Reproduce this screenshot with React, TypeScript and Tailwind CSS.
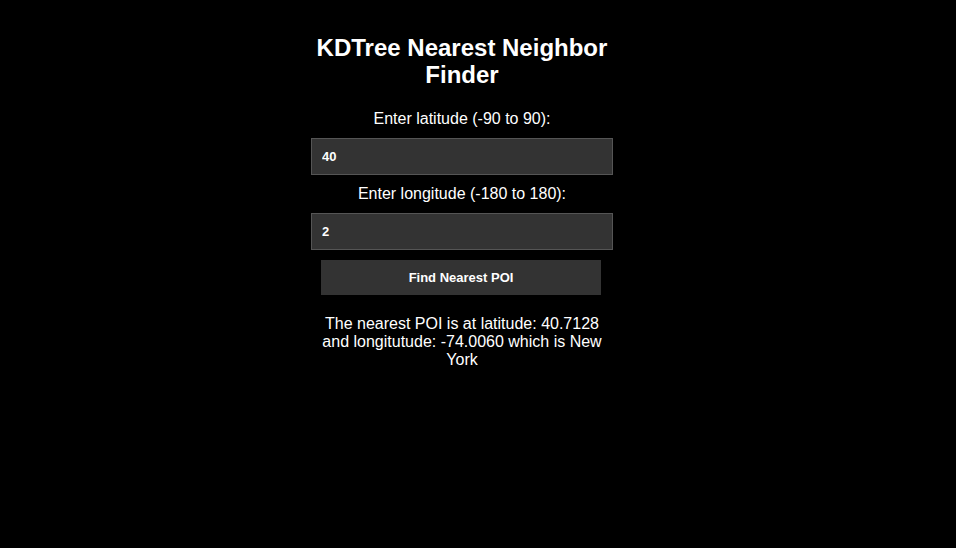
import React, { useState } from 'react';

const App: React.FC = () => {
  const [lat, setLat] = useState('40');
  const [lon, setLon] = useState('2');

  return (
    <div className="min-h-[548px] w-full bg-black text-white font-['Liberation_Sans',Arial,sans-serif]">
      <div className="ml-[311px] w-[302px] pt-[34px] flex flex-col items-center text-center">
        <h1 className="text-[24px] font-bold leading-[27px]">KDTree Nearest Neighbor Finder</h1>

        <label className="mt-[22px] text-[16px] leading-[18px]">Enter latitude (-90 to 90):</label>
        <input
          value={lat}
          onChange={(e) => setLat(e.target.value)}
          className="mt-[10px] w-full h-[37px] bg-[#333333] border border-[#555555] px-[10px] text-[13px] font-semibold text-white outline-none"
        />

        <label className="mt-[10px] text-[16px] leading-[18px]">Enter longitude (-180 to 180):</label>
        <input
          value={lon}
          onChange={(e) => setLon(e.target.value)}
          className="mt-[10px] w-full h-[37px] bg-[#333333] border border-[#555555] px-[10px] text-[13px] font-semibold text-white outline-none"
        />

        <button className="mt-[10px] self-start ml-[10px] w-[280px] h-[35px] bg-[#333333] text-[13px] font-bold text-white">
          Find Nearest POI
        </button>

        <p className="mt-[20px] text-[16px] leading-[18px]">
          The nearest POI is at latitude: 40.7128 and longitutude: -74.0060 which is New York
        </p>
      </div>
    </div>
  );
};

export default App;
